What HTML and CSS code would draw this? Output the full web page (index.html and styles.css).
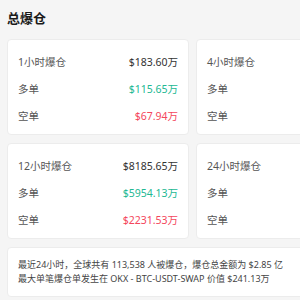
FILE: index.html
```html
<!DOCTYPE html>
<html lang="zh-CN">
<head>
<meta charset="utf-8">
<link rel="stylesheet" href="styles.css">
</head>
<body>
<div class="page">
  <h1 class="title">总爆仓</h1>
  <div class="grid">
    <div class="card">
      <div class="row"><span class="label">1小时爆仓</span><span class="val">$183.60万</span></div>
      <div class="row"><span class="label">多单</span><span class="val up">$115.65万</span></div>
      <div class="row"><span class="label">空单</span><span class="val down">$67.94万</span></div>
    </div>
    <div class="card">
      <div class="row"><span class="label">4小时爆仓</span><span class="val"></span></div>
      <div class="row"><span class="label">多单</span><span class="val up"></span></div>
      <div class="row"><span class="label">空单</span><span class="val down"></span></div>
    </div>
    <div class="card">
      <div class="row"><span class="label">12小时爆仓</span><span class="val">$8185.65万</span></div>
      <div class="row"><span class="label">多单</span><span class="val up">$5954.13万</span></div>
      <div class="row"><span class="label">空单</span><span class="val down">$2231.53万</span></div>
    </div>
    <div class="card">
      <div class="row"><span class="label">24小时爆仓</span><span class="val"></span></div>
      <div class="row"><span class="label">多单</span><span class="val up"></span></div>
      <div class="row"><span class="label">空单</span><span class="val down"></span></div>
    </div>
  </div>
  <div class="card note">
    <p>最近24小时，全球共有 113,538 人被爆仓，爆仓总金额为 $2.85 亿</p>
    <p>最大单笔爆仓单发生在 OKX - BTC-USDT-SWAP 价值 $241.13万</p>
  </div>
</div>
</body>
</html>
```

FILE: styles.css
```css
html, body {
  margin: 0;
  padding: 0;
  overflow: hidden;
  background: #f5f5f5;
}
body {
  font-family: "Noto Sans", "Noto Sans CJK SC", sans-serif;
  color: #333;
}
.page {
  width: 371px;
  padding: 8px 0 0 7px;
}
.title {
  margin: 0;
  font-size: 13px;
  line-height: 20px;
  font-weight: 700;
  color: #1a1a1a;
}
.grid {
  margin-top: 11px;
  display: grid;
  grid-template-columns: 182px 182px;
  column-gap: 7px;
  row-gap: 8px;
}
.card {
  background: #fff;
  border: 1px solid #ececec;
  border-radius: 4px;
}
.grid .card {
  padding: 14px 10px 10px 10px;
  display: flex;
  flex-direction: column;
  gap: 11px;
}
.row {
  display: flex;
  justify-content: space-between;
  font-size: 10.5px;
  line-height: 16px;
}
.label {
  color: #555;
}
.val {
  color: #333;
}
.val.up { color: #22b893; }
.val.down { color: #f4465c; }
.note {
  margin-top: 8px;
  padding: 10px 10px;
}
.note p {
  margin: 0;
  font-size: 9px;
  line-height: 14px;
  color: #444;
  white-space: nowrap;
}
```
